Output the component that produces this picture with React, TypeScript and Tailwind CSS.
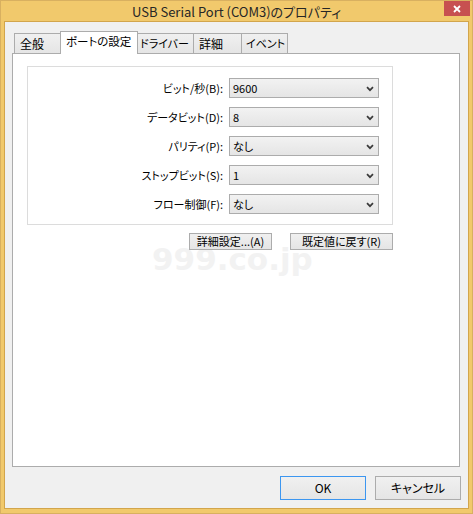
import React from "react"

const jp = "font-['Noto_Sans_CJK_JP','Noto_Sans',sans-serif] [font-feature-settings:'palt']"

const rows = [
  { label: "ビット/秒(B):", value: "9600" },
  { label: "データビット(D):", value: "8" },
  { label: "パリティ(P):", value: "なし" },
  { label: "ストップビット(S):", value: "1" },
  { label: "フロー制御(F):", value: "なし" },
]

function Chevron() {
  return (
    <svg width="8" height="6" viewBox="0 0 8 6" className="shrink-0 mt-[2px]">
      <path d="M1 1.2L4 4.2L7 1.2" stroke="#3a3a3a" strokeWidth="1.7" fill="none" />
    </svg>
  )
}

function Combo({ value }: { value: string }) {
  return (
    <div className="h-[20px] flex items-center justify-between pl-[3px] pr-[4px] border border-[#acacac] bg-gradient-to-b from-[#f2f2f2] to-[#e5e5e5] text-[11px] text-black leading-none">
      <span>{value}</span>
      <Chevron />
    </div>
  )
}

function Button({ children, className = "" }: { children: React.ReactNode; className?: string }) {
  return (
    <button
      className={
        "flex items-center justify-center border bg-gradient-to-b from-[#f0f0f0] to-[#e5e5e5] text-black leading-none whitespace-nowrap " +
        className
      }
    >
      {children}
    </button>
  )
}

export default function App() {
  return (
    <div className={`w-[473px] h-[514px] flex flex-col bg-[#f1c96c] border border-[#d8b060] ${jp}`}>
      {/* TITLE BAR */}
      <div className="h-[20px] grid grid-cols-[1fr_auto_1fr] items-start">
        <div />
        <div className="h-[20px] flex items-center text-[13px] text-[#262626] leading-none whitespace-nowrap pt-[1px]">
          USB Serial Port (COM3)のプロパティ
        </div>
        <div className="flex justify-end pr-[2px]">
          <div className="w-[26px] h-[15px] bg-[#c75050] flex items-center justify-center">
            <svg width="8" height="8" viewBox="0 0 8 8">
              <path d="M1 1L7 7M7 1L1 7" stroke="#fff" strokeWidth="1.8" />
            </svg>
          </div>
        </div>
      </div>

      {/* BODY */}
      <div className="mx-[3px] mb-[4px] flex-1 flex flex-col border border-[#d2a54c] bg-[#f0f0f0] pt-[9px] pb-[8px]">
        {/* TABS */}
        <div className="ml-[9px] h-[22px] flex items-end text-[12px] text-black leading-none whitespace-nowrap">
          <div className="w-[47px] h-[20px] flex items-center pl-[5px] border border-b-0 border-[#acacac] bg-gradient-to-b from-[#f0f0f0] to-[#e5e5e5]">
            全般
          </div>
          <div className="relative z-10 -ml-px -mb-px w-[78px] h-[23px] flex items-center pl-[5px] pb-[2px] border border-b-0 border-[#acacac] bg-white text-[11.5px]">
            ポートの設定
          </div>
          <div className="-ml-px w-[57px] h-[20px] flex items-center pl-[2px] border border-b-0 border-[#acacac] bg-gradient-to-b from-[#f0f0f0] to-[#e5e5e5] text-[11px]">
            ドライバー
          </div>
          <div className="-ml-px w-[49px] h-[20px] flex items-center pl-[5px] border border-b-0 border-[#acacac] bg-gradient-to-b from-[#f0f0f0] to-[#e5e5e5]">
            詳細
          </div>
          <div className="-ml-px w-[47px] h-[20px] flex items-center pl-[4px] border border-b-0 border-[#acacac] bg-gradient-to-b from-[#f0f0f0] to-[#e5e5e5] text-[11px]">
            イベント
          </div>
        </div>

        {/* PANEL */}
        <div className="relative flex-1 ml-[7px] mr-[8px] border border-[#acacac] bg-white pl-[14px] pt-[12px]">
          <div className="absolute left-[139px] top-[190px] font-['DejaVu_Sans',sans-serif] font-bold text-[31px] leading-none text-[#f2f2f2] select-none pointer-events-none">
            999.co.jp
          </div>

          <div className="relative w-[366px]">
            <div className="border border-[#dcdcdc] pt-[11px] pb-[10px] pr-[13px] grid grid-cols-[1fr_150px] gap-x-[6px] gap-y-[9px] items-center">
              {rows.map((r) => (
                <React.Fragment key={r.label}>
                  <div className="text-right text-[11px] text-black leading-none whitespace-nowrap">{r.label}</div>
                  <Combo value={r.value} />
                </React.Fragment>
              ))}
            </div>

            <div className="mt-[8px] flex justify-end gap-[18px]">
              <Button className="w-[83px] h-[17px] border-[#acacac] text-[11px]">詳細設定...(A)</Button>
              <Button className="w-[103px] h-[17px] border-[#acacac] text-[11px]">既定値に戻す(R)</Button>
            </div>
          </div>
        </div>

        {/* FOOTER BUTTONS */}
        <div className="mt-[9px] pr-[7px] flex justify-end gap-[9px]">
          <Button className="w-[86px] h-[24px] border-[#3c96f0] text-[12px]">OK</Button>
          <Button className="w-[86px] h-[24px] border-[#acacac] text-[12px]">キャンセル</Button>
        </div>
      </div>
    </div>
  )
}
